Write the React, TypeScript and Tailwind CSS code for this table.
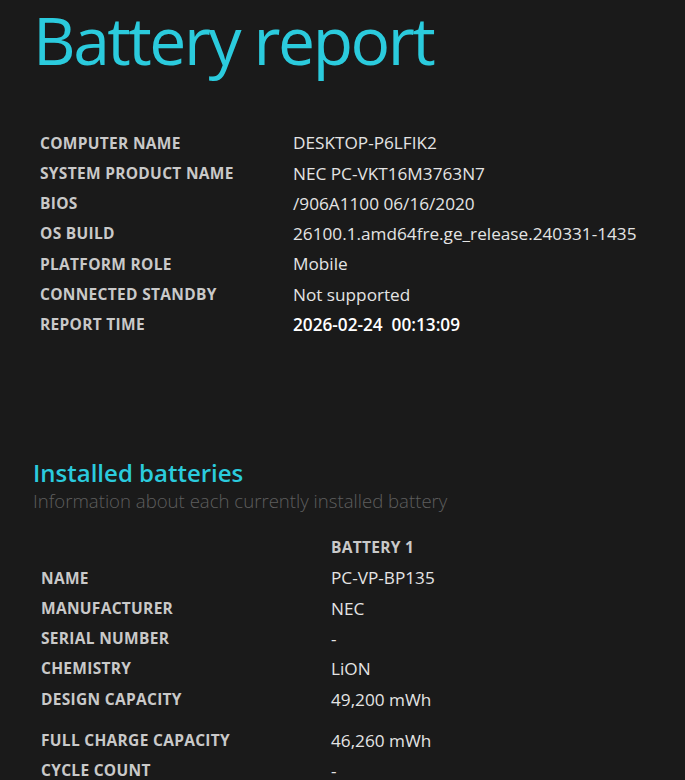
const system = [
  ['COMPUTER NAME', 'DESKTOP-P6LFIK2'],
  ['SYSTEM PRODUCT NAME', 'NEC PC-VKT16M3763N7'],
  ['BIOS', '/906A1100 06/16/2020'],
  ['OS BUILD', '26100.1.amd64fre.ge_release.240331-1435'],
  ['PLATFORM ROLE', 'Mobile'],
  ['CONNECTED STANDBY', 'Not supported'],
  ['REPORT TIME', '2026-02-24\u00a0\u00a000:13:09'],
]

const battery = [
  ['NAME', 'PC-VP-BP135'],
  ['MANUFACTURER', 'NEC'],
  ['SERIAL NUMBER', '-'],
  ['CHEMISTRY', 'LiON'],
  ['DESIGN CAPACITY', '49,200 mWh'],
]

const battery2 = [
  ['FULL CHARGE CAPACITY', '46,260 mWh'],
  ['CYCLE COUNT', '-'],
]

function Row({ k, v, w, strong }: { k: string; v: string; w: string; strong?: boolean }) {
  return (
    <div className="flex items-center h-[30.3px]">
      <div className={`${w} shrink-0 text-[15.5px] font-bold text-[#c9c9c9] tracking-[0.3px]`}>{k}</div>
      <div className={`text-[17.2px] whitespace-nowrap ${strong ? 'text-white font-semibold' : 'text-[#e4e4e4]'}`}>{v}</div>
    </div>
  )
}

export default function App() {
  return (
    <div className="min-h-[780px] bg-[#1a1a1a] overflow-hidden font-['Open_Sans',sans-serif]">
      <h1 className="-mt-[6px] pl-[33px] text-[66px] leading-[90px] text-[#2bcbdd] tracking-[-2.5px] whitespace-nowrap">
        Battery report
      </h1>

      {/* System info */}
      <div className="mt-[44px] pl-[40px]">
        {system.map(([k, v], i) => (
          <Row key={k} k={k} v={v} w="w-[253px]" strong={i === system.length - 1} />
        ))}
      </div>

      {/* Installed batteries */}
      <div className="mt-[118px] pl-[33px]">
        <h2 className="text-[24px] leading-[30px] font-semibold text-[#2bcbdd]">Installed batteries</h2>
        <p className="text-[18.6px] leading-[26px] font-light text-[#5e5e5e] whitespace-nowrap">
          Information about each currently installed battery
        </p>
      </div>

      <div className="mt-[19px] pl-[41px]">
        <div className="flex items-center h-[30px]">
          <div className="w-[290px]" />
          <div className="text-[15.5px] font-bold text-[#c9c9c9] tracking-[0.3px]">BATTERY 1</div>
        </div>
        {battery.map(([k, v]) => (
          <Row key={k} k={k} v={v} w="w-[290px]" />
        ))}
        <div className="h-[11px]" />
        {battery2.map(([k, v]) => (
          <Row key={k} k={k} v={v} w="w-[290px]" />
        ))}
      </div>
    </div>
  )
}
